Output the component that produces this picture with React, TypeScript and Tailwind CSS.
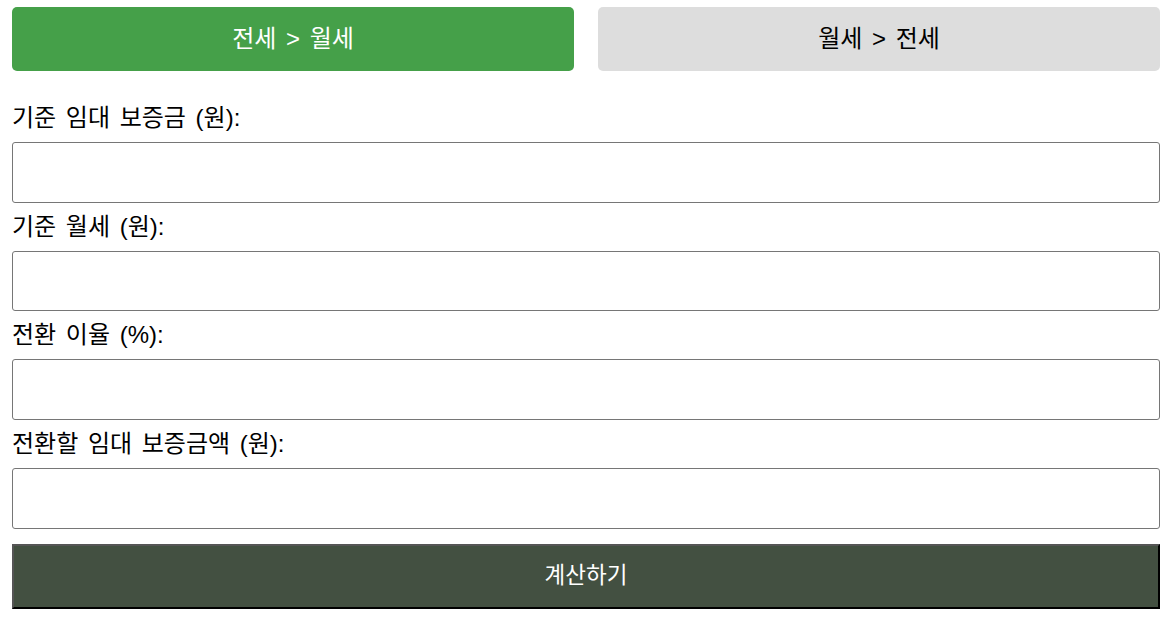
import { useState } from "react";

const fields = [
  "기준 임대 보증금 (원):",
  "기준 월세 (원):",
  "전환 이율 (%):",
  "전환할 임대 보증금액 (원):",
];

export default function App() {
  const [mode, setMode] = useState<"toMonthly" | "toJeonse">("toMonthly");

  return (
    <div className="min-h-screen bg-white px-3 pt-[7px] font-['Liberation_Sans','Noto_Sans_CJK_KR',sans-serif] text-black">
      <div className="mb-[23px] flex w-[1148px] gap-6">
        <button
          onClick={() => setMode("toMonthly")}
          className={`h-16 flex-1 rounded-[5px] text-[24px] [word-spacing:3px] ${
            mode === "toMonthly" ? "bg-[#45a049] text-white" : "bg-[#dddddd] text-black"
          }`}
        >
          전세 &gt; 월세
        </button>
        <button
          onClick={() => setMode("toJeonse")}
          className={`h-16 flex-1 rounded-[5px] text-[24px] [word-spacing:3px] ${
            mode === "toJeonse" ? "bg-[#45a049] text-white" : "bg-[#dddddd] text-black"
          }`}
        >
          월세 &gt; 전세
        </button>
      </div>

      <div className="flex w-[1148px] flex-col">
        {fields.map((label, i) => (
          <div key={label} className="flex flex-col">
            <label className={`${i === 0 ? "mt-[10px]" : "mt-[10px]"} mb-[10px] block text-[24px] leading-7 [word-spacing:3px]`}>
              {label}
            </label>
            <input
              type="text"
              className="h-[60.7px] w-full rounded-[3px] border border-[#767676] px-2 text-[20px] outline-none"
            />
          </div>
        ))}
        <button className="mt-[15px] h-[65px] w-full border-2 border-t-[#555555] border-l-[#555555] border-r-black border-b-black bg-[#435041] text-[22.5px] text-white">
          계산하기
        </button>
      </div>
    </div>
  );
}
